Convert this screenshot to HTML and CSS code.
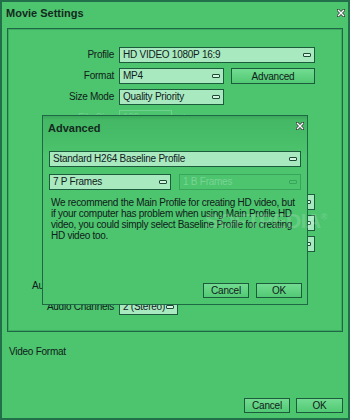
FILE: index.html
```html
<!DOCTYPE html>
<html lang="en">
<head>
    <meta charset="UTF-8">
    <title>Movie Settings</title>
    <link rel="stylesheet" href="styles.css">
</head>
<body>
    <div class="window">
        <div class="titlebar">
            <span class="title">Movie Settings</span>
            <svg class="close" width="8" height="8" viewBox="0 0 8 8"><path d="M1 1L7 7M7 1L1 7" stroke="#3a4a40" stroke-width="3" stroke-linecap="square"/><path d="M1 1L7 7M7 1L1 7" stroke="#fff" stroke-width="1.4"/></svg>
        </div>

        <div class="group">
            <div class="row">
                <label>Profile</label>
                <div class="select w-wide">HD VIDEO 1080P 16:9<i></i></div>
            </div>
            <div class="row">
                <label>Format</label>
                <div class="select w-mid">MP4<i></i></div>
                <button class="btn btn-adv">Advanced</button>
            </div>
            <div class="row">
                <label>Size Mode</label>
                <div class="select w-mid">Quality Priority<i></i></div>
            </div>
            <div class="row disabled">
                <label>File Size</label>
                <div class="select w-small">100</div>
                <span class="unit">k</span>
            </div>
            <!-- rows below sit behind the Advanced dialog -->
            <div class="row"><label></label><div class="select w-mid"><i></i></div></div>
            <div class="row"><label></label><div class="select w-mid"><i></i></div></div>
            <div class="row"><label></label><div class="select w-mid"><i></i></div></div>
            <div class="row"><label></label><div class="select w-wide"><i></i></div></div>
            <div class="row"><label></label><div class="select w-wide"><i></i></div></div>
            <div class="row"><label></label><div class="select w-wide"><i></i></div></div>
            <div class="row"><label></label><div class="select w-mid"><i></i></div></div>
            <div class="row">
                <label>Audio Sample Rate</label>
                <div class="select w-mid"><i></i></div>
            </div>
            <div class="row">
                <label>Audio Channels</label>
                <div class="select w-ch">2 (Stereo)<i></i></div>
            </div>
        </div>

        <div class="status">Video Format</div>

        <div class="footer">
            <button class="btn">Cancel</button>
            <button class="btn">OK</button>
        </div>

        <div class="dialog">
            <div class="dlg-title">
                <span class="title">Advanced</span>
                <svg class="close" width="8" height="8" viewBox="0 0 8 8"><path d="M1 1L7 7M7 1L1 7" stroke="#3a4a40" stroke-width="3" stroke-linecap="square"/><path d="M1 1L7 7M7 1L1 7" stroke="#fff" stroke-width="1.4"/></svg>
            </div>
            <div class="dlg-body">
                <div class="select w-full">Standard H264 Baseline Profile<i></i></div>
                <div class="pair">
                    <div class="select w-half">7 P Frames<i></i></div>
                    <div class="select w-half off">1 B Frames<i></i></div>
                </div>
                <p class="note">We recommend the Main Profile for creating HD video, but if your computer has problem when using Main Profile HD video, you could simply select Baseline Profile for creating HD video too.</p>
            </div>
            <div class="dlg-buttons">
                <button class="btn">Cancel</button>
                <button class="btn">OK</button>
            </div>
        </div>

        <span class="watermark">SOFTPEDIA<sup>®</sup></span>
    </div>
</body>
</html>
```

FILE: styles.css
```css
* {
    box-sizing: border-box;
}
body {
    margin: 0;
    font-family: "Liberation Sans", Arial, sans-serif;
    font-size: 10px;
    letter-spacing: -0.25px;
    color: #10201a;
}
.window {
    position: relative;
    width: 350px;
    height: 420px;
    background: #4dc46e;
    border: 2px solid #22704a;
    display: flex;
    flex-direction: column;
    overflow: hidden;
}
.titlebar {
    height: 26px;
    display: flex;
    justify-content: space-between;
    align-items: flex-start;
    padding: 5px 3px 0 4px;
}
.title {
    font-size: 11px;
    font-weight: bold;
    letter-spacing: 0;
    line-height: 12px;
    color: #142a1e;
}
.close {
    margin-top: 2px;
}
.group {
    margin: 0 5px;
    height: 304px;
    border: 1px solid #1f6845;
    box-shadow: inset 0 0 0 1px #3cab60;
    padding-top: 18px;
    display: flex;
    flex-direction: column;
    gap: 5px;
}
.row {
    display: flex;
    align-items: center;
    gap: 5px;
    height: 16px;
}
.row label {
    width: 106px;
    flex-shrink: 0;
    text-align: right;
    white-space: nowrap;
    line-height: 16px;
}
.select {
    position: relative;
    height: 16px;
    line-height: 14px;
    padding-left: 3px;
    background: #a8e9bf;
    border: 1px solid #1c5c3d;
    white-space: nowrap;
    overflow: hidden;
}
.select i {
    position: absolute;
    right: 3px;
    top: 5px;
    width: 8px;
    height: 4px;
    border: 1px solid #1c4a34;
    border-radius: 1px;
    background: #d4f5e0;
}
.w-wide { width: 196px; }
.w-mid { width: 105px; }
.w-small { width: 53px; }
.w-ch { width: 59px; }
.w-full { width: 252px; }
.w-half { width: 122px; }
.disabled label,
.disabled .unit {
    color: #6fcf8c;
}
.disabled .select {
    background: transparent;
    border-color: #6fcf8c;
    color: #6fcf8c;
}
.unit {
    margin-left: 6px;
}
.btn {
    height: 15px;
    width: 46px;
    padding: 0;
    font-family: inherit;
    font-size: 10px;
    letter-spacing: -0.2px;
    line-height: 13px;
    color: #10201a;
    background: linear-gradient(#72dc91, #52c974);
    border: 1px solid #1c5c3d;
    cursor: pointer;
}
.btn-adv {
    width: 84px;
    height: 16px;
    margin-left: 2px;
}
.status {
    margin: 14px 0 0 7px;
    line-height: 12px;
}
.footer {
    margin-top: auto;
    display: flex;
    justify-content: flex-end;
    gap: 6px;
    padding: 0 5px 5px 0;
}
.footer .btn:last-child {
    width: 47px;
}
.dialog {
    position: absolute;
    left: 40px;
    top: 113px;
    width: 266px;
    height: 190px;
    background: linear-gradient(#3aa85a 0, #44b865 4px, #4ac06b 30px, #4dc46e 40px);
    border: 1px solid #1f6845;
    display: flex;
    flex-direction: column;
}
.dlg-title {
    height: 35px;
    display: flex;
    justify-content: space-between;
    align-items: flex-start;
    padding: 6px 3px 0 5px;
}
.dlg-title .close {
    margin-top: 0;
}
.dlg-body {
    padding: 0 6px;
}
.pair {
    display: flex;
    gap: 8px;
    margin-top: 7px;
}
.select.off {
    background: transparent;
    border-color: #3aa45c;
    color: #78d494;
}
.select.off i {
    background: transparent;
    border-color: #3aa45c;
}
.note {
    margin: 7px 0 0 2px;
    line-height: 11px;
    width: 247px;
    letter-spacing: -0.27px;
}
.dlg-buttons {
    margin-top: auto;
    display: flex;
    justify-content: flex-end;
    gap: 7px;
    padding: 0 5px 6px 0;
}
.watermark {
    position: absolute;
    left: 203px;
    top: 207px;
    font-size: 21px;
    font-weight: bold;
    letter-spacing: -0.5px;
    color: rgba(255, 255, 255, 0.18);
    pointer-events: none;
}
.watermark sup {
    font-size: 9px;
}
```
